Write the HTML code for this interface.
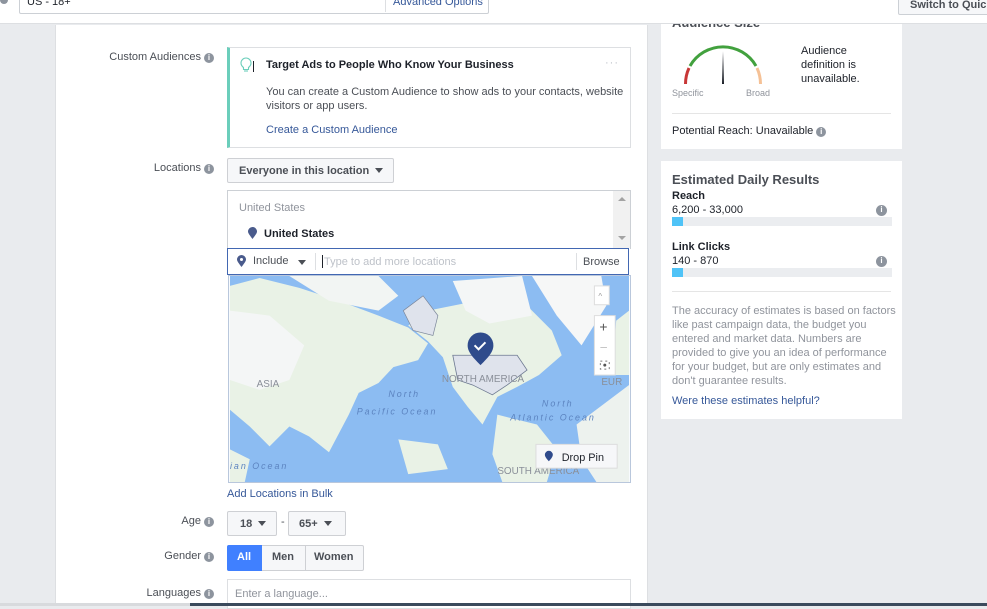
<!DOCTYPE html>
<html><head><meta charset="utf-8"><style>
*{box-sizing:border-box;margin:0;padding:0}
body{width:987px;height:606px;overflow:hidden;background:#e9ebee;font-family:"Liberation Sans",Arial,sans-serif;font-size:11px;color:#1d2129;position:relative}
.a{position:absolute}
.info{display:inline-block;width:10px;height:10px;border-radius:50%;background:#8d949e;color:#fff;font-size:8px;font-weight:bold;text-align:center;line-height:10px;vertical-align:0px;margin-left:3px}
.lbl{position:absolute;right:773px;color:#4b4f56;font-size:11px;white-space:nowrap}
.btn{position:absolute;background:#f6f7f9;border:1px solid #ced0d4;border-radius:2px;font-weight:bold;color:#4b4f56;font-size:11px}
.tri{display:inline-block;width:0;height:0;border-left:4.5px solid transparent;border-right:4.5px solid transparent;border-top:5px solid #4b4f56;vertical-align:1px;margin-left:6px}
.link{color:#365899}
</style></head><body>
<div class="a" style="left:661px;top:0;width:241px;height:149px;background:#fff"></div>
<div class="a" style="left:672px;top:15px;font-size:13px;font-weight:bold;color:#4b4f56">Audience Size</div>
<div class="a" style="left:0;top:0;width:987px;height:24px;background:#fff;border-bottom:1px solid #dddfe2"></div>
<div class="a" style="left:0;top:-4px;width:8px;height:8px;border-radius:50%;background:#8d949e"></div>
<div class="a" style="left:19px;top:-2px;width:470px;height:16px;border:1px solid #ccd0d5;border-radius:2px;background:#fff"></div>
<div class="a" style="left:27px;top:-4px;color:#1d2129;font-size:11px">US - 18+</div>
<div class="a" style="left:385px;top:-2px;width:1px;height:14px;background:#dddfe2"></div>
<div class="a link" style="left:393px;top:-4px;font-size:11px">Advanced Options</div>
<div class="a" style="left:898px;top:-2px;width:100px;height:17px;border:1px solid #ccd0d5;border-radius:2px;background:#f6f7f9;font-weight:bold;color:#4b4f56;padding:0 0 0 11px;line-height:12px">Switch to Quick</div>

<div class="a" style="left:55px;top:25px;width:593px;height:581px;background:#fff;border-left:1px solid #dddfe2;border-right:1px solid #dddfe2"></div>

<div class="lbl" style="top:51px">Custom Audiences<span class="info">i</span></div>
<div class="a" style="left:227px;top:47px;width:404px;height:101px;border:1px solid #dddfe2;border-left:3px solid #6bcebb;background:#fff"></div>
<svg class="a" style="left:239px;top:56px" width="16" height="18" viewBox="0 0 16 18"><path d="M4.5 11.5C2.5 10 2 8.5 2 7a5 5 0 0 1 10 0c0 1.5-.5 3-2.5 4.5v2h-5z" fill="none" stroke="#6bcebb" stroke-width="1.1"/><path d="M5 15h4" stroke="#6bcebb" stroke-width="1.1"/><path d="M14.5 5v11" stroke="#1d2129" stroke-width="1"/></svg>
<div class="a" style="left:266px;top:59px;font-weight:bold;font-size:11px">Target Ads to People Who Know Your Business</div>
<div class="a" style="left:605px;top:57px;color:#bec2c9;font-size:11px;letter-spacing:1px">···</div>
<div class="a" style="left:266px;top:85px;width:360px;color:#4b4f56;line-height:14px">You can create a Custom Audience to show ads to your contacts, website visitors or app users.</div>
<div class="a link" style="left:266px;top:124px">Create a Custom Audience</div>

<div class="lbl" style="top:162px">Locations<span class="info">i</span></div>
<div class="btn" style="left:227px;top:158px;width:167px;height:25px;padding:6px 0 0 11px">Everyone in this location<span class="tri"></span></div>

<div class="a" style="left:227px;top:190px;width:404px;height:59px;border:1px solid #ccd0d5;border-bottom:none;background:#fff"></div>
<div class="a" style="left:613px;top:191px;width:17px;height:57px;background:#f1f1f1"></div>
<div class="a" style="left:618px;top:197px;border-left:4px solid transparent;border-right:4px solid transparent;border-bottom:4px solid #a3a3a3"></div>
<div class="a" style="left:618px;top:236px;border-left:4px solid transparent;border-right:4px solid transparent;border-top:4px solid #a3a3a3"></div>
<div class="a" style="left:239px;top:202px;color:#90949c">United States</div>
<svg class="a" style="left:248px;top:227px" width="9" height="12" viewBox="0 0 9 12"><path d="M4.5 12C1.5 8 0 6 0 4.5a4.5 4.5 0 0 1 9 0C9 6 7.5 8 4.5 12z" fill="#4a5b8c"/></svg>
<div class="a" style="left:264px;top:228px;font-weight:bold">United States</div>

<div class="a" style="left:227px;top:248px;width:402px;height:27px;border:1px solid #4267b2;background:#fff"></div>
<svg class="a" style="left:237px;top:255px" width="9" height="12" viewBox="0 0 9 12"><path d="M4.5 12C1.5 8 0 6 0 4.5a4.5 4.5 0 0 1 9 0C9 6 7.5 8 4.5 12z" fill="#4a5b8c"/><circle cx="4.5" cy="4.5" r="1.5" fill="#fff"/></svg>
<div class="a" style="left:253px;top:255px;color:#4b4f56">Include</div>
<div class="a" style="left:298px;top:260px;border-left:4.5px solid transparent;border-right:4.5px solid transparent;border-top:5px solid #4b4f56"></div>
<div class="a" style="left:315px;top:253px;width:1px;height:17px;background:#dddfe2"></div>
<div class="a" style="left:322px;top:255px;width:1px;height:13px;background:#1d2129"></div>
<div class="a" style="left:324px;top:256px;color:#bec2c9">Type to add more locations</div>
<div class="a" style="left:576px;top:253px;width:1px;height:17px;background:#dddfe2"></div>
<div class="a" style="left:583px;top:256px;color:#4b4f56">Browse</div>

<svg class="a" style="left:228px;top:275px;border:1px solid #b9c7dc" width="403" height="208" viewBox="0 0 403 208">
<rect width="403" height="208" fill="#8cbcf2"/>
<path d="M0 10 L30 2 L70 12 L110 25 L150 40 L180 52 L200 68 L190 85 L165 92 L150 108 L130 118 L120 140 L100 178 L80 162 L60 152 L40 172 L20 152 L0 135Z" fill="#e9f2e6"/>
<path d="M0 35 L40 40 L75 70 L60 105 L30 115 L0 105Z" fill="#f4f6f6"/>
<path d="M60 0 L150 0 L170 20 L150 35 L100 25Z" fill="#f2f5f3"/>
<path d="M175 55 L190 60 L195 75 L183 80Z" fill="#e9f2e6"/>
<path d="M170 165 L210 170 L220 195 L180 200Z" fill="#e9f2e6"/>
<path d="M0 175 L20 185 L15 208 L0 208Z" fill="#e9f2e6"/>
<path d="M270 140 L310 150 L330 175 L320 208 L275 208 L265 180Z" fill="#e9f2e6"/>
<path d="M350 150 L403 110 L403 208 L370 208 L355 185Z" fill="#edf2ee"/>
<path d="M390 45 L403 35 L403 100 L386 100Z" fill="#e9f2e6"/>
<path d="M180 50 L200 35 L250 25 L290 20 L325 55 L335 80 L312 100 L290 112 L270 122 L255 150 L240 132 L225 112 L215 82 L200 66Z" fill="#e9f2e6"/>
<path d="M175 35 L195 20 L210 40 L205 60 L185 55Z" fill="#dfe3ec" stroke="#7b869a" stroke-width=".7"/>
<path d="M225 80 L290 80 L300 95 L280 110 L265 120 L245 110 L230 105Z" fill="#dfe3ec" stroke="#6c7890" stroke-width=".8"/>
<path d="M225 5 L295 0 L305 40 L262 48 L238 35Z" fill="#f4f6f6"/>
<path d="M305 0 L375 0 L380 30 L355 70 L330 40Z" fill="#f6f7f7"/>
<text x="27" y="112" font-size="10" fill="#8a8f99" font-family="Liberation Sans">ASIA</text>
<text x="214" y="107" font-size="10" fill="#8a8f99" font-family="Liberation Sans">NORTH AMERICA</text>
<text x="375" y="110" font-size="10" fill="#8a8f99" font-family="Liberation Sans">EUR</text>
<text x="160" y="122" font-size="9" fill="#5c84c0" font-style="italic" font-family="Liberation Sans" letter-spacing="2">North</text>
<text x="128" y="140" font-size="9" fill="#5c84c0" font-style="italic" font-family="Liberation Sans" letter-spacing="2">Pacific Ocean</text>
<text x="315" y="132" font-size="9" fill="#5c84c0" font-style="italic" font-family="Liberation Sans" letter-spacing="2">North</text>
<text x="283" y="146" font-size="9" fill="#5c84c0" font-style="italic" font-family="Liberation Sans" letter-spacing="2">Atlantic Ocean</text>
<text x="270" y="200" font-size="10" fill="#8a8f99" font-family="Liberation Sans">SOUTH AMERICA</text>
<text x="0" y="195" font-size="9" fill="#5c84c0" font-style="italic" font-family="Liberation Sans" letter-spacing="2">ian Ocean</text>
<path d="M253 90C244 81 240 76 240 70a13 13 0 0 1 26 0c0 6-4 11-13 20z" fill="#2f4b8c"/>
<path d="M247 70l4 4 7-7" stroke="#fff" stroke-width="2" fill="none"/>
<rect x="368" y="10" width="15" height="19" fill="#fff" stroke="#ddd"/><text x="372" y="23" font-size="8" fill="#999">^</text>
<rect x="368" y="40" width="21" height="60" fill="#fff" stroke="#ddd"/>
<text x="373" y="56" font-size="14" fill="#555">+</text><text x="374" y="75" font-size="12" fill="#bbb">–</text>
<rect x="374" y="86" width="9" height="8" fill="none" stroke="#777" stroke-dasharray="2 3"/><circle cx="378.5" cy="90" r="1.5" fill="#555"/>
<rect x="309" y="170" width="82" height="24" fill="#f6f7f9" stroke="#ddd"/>
<path d="M322 187C319 184 318 182 318 180.5a4 4 0 0 1 8 0c0 1.5-1 3.5-4 6.5z" fill="#2f4b8c"/>
<text x="335" y="187" font-size="11" fill="#1d2129" font-family="Liberation Sans">Drop Pin</text>
</svg>
<div class="a link" style="left:227px;top:488px">Add Locations in Bulk</div>

<div class="lbl" style="top:515px">Age<span class="info">i</span></div>
<div class="btn" style="left:227px;top:511px;width:50px;height:25px;padding:6px 0 0 12px">18<span class="tri"></span></div>
<div class="a" style="left:281px;top:516px;color:#4b4f56">-</div>
<div class="btn" style="left:288px;top:511px;width:58px;height:25px;padding:6px 0 0 10px">65+<span class="tri"></span></div>

<div class="lbl" style="top:550px">Gender<span class="info">i</span></div>
<div class="btn" style="left:227px;top:545px;width:137px;height:26px"></div>
<div class="a" style="left:227px;top:545px;width:35px;height:26px;background:#4080ff;color:#fff;font-weight:bold;padding:6px 0 0 10px;border-radius:2px 0 0 2px">All</div>
<div class="a" style="left:272px;top:551px;font-weight:bold;color:#4b4f56">Men</div>
<div class="a" style="left:305px;top:546px;width:1px;height:24px;background:#ced0d4"></div>
<div class="a" style="left:314px;top:551px;font-weight:bold;color:#4b4f56">Women</div>

<div class="lbl" style="top:587px">Languages<span class="info">i</span></div>
<div class="a" style="left:227px;top:579px;width:404px;height:30px;border:1px solid #dddfe2;background:#fff"></div>
<div class="a" style="left:235px;top:588px;color:#90949c">Enter a language...</div>

<svg class="a" style="left:680px;top:40px" width="90" height="50" viewBox="0 0 90 50">
<path d="M5.5 44 A38 38 0 0 1 9 28" stroke="#c83737" stroke-width="3" fill="none"/>
<path d="M10 26 A38 38 0 0 1 76 26" stroke="#42a13e" stroke-width="3" fill="none"/>
<path d="M77 28 A38 38 0 0 1 80.5 44" stroke="#f5c196" stroke-width="3" fill="none"/>
<path d="M42 44 L43 11 L44 44Z" fill="#1d2129"/>
</svg>
<div class="a" style="left:672px;top:88px;font-size:9px;color:#90949c">Specific</div>
<div class="a" style="left:746px;top:88px;font-size:9px;color:#90949c">Broad</div>
<div class="a" style="left:801px;top:44px;line-height:14px;color:#1d2129">Audience<br>definition is<br>unavailable.</div>
<div class="a" style="left:672px;top:113px;width:219px;height:1px;background:#e5e5e5"></div>
<div class="a" style="left:672px;top:125px">Potential Reach: Unavailable<span class="info">i</span></div>

<div class="a" style="left:661px;top:161px;width:241px;height:258px;background:#fff"></div>
<div class="a" style="left:672px;top:172px;font-size:13px;font-weight:bold;color:#4b4f56">Estimated Daily Results</div>
<div class="a" style="left:672px;top:190px;font-weight:bold;color:#1d2129">Reach</div>
<div class="a" style="left:672px;top:204px">6,200 - 33,000</div>
<div class="a" style="left:876px;top:203px"><span class="info" style="margin:0;width:11px;height:11px">i</span></div>
<div class="a" style="left:672px;top:217px;width:220px;height:9px;background:#ebedf0"></div>
<div class="a" style="left:672px;top:217px;width:11px;height:9px;background:#4fc3f7"></div>
<div class="a" style="left:672px;top:241px;font-weight:bold">Link Clicks</div>
<div class="a" style="left:672px;top:255px">140 - 870</div>
<div class="a" style="left:876px;top:254px"><span class="info" style="margin:0;width:11px;height:11px">i</span></div>
<div class="a" style="left:672px;top:268px;width:220px;height:9px;background:#ebedf0"></div>
<div class="a" style="left:672px;top:268px;width:11px;height:9px;background:#4fc3f7"></div>
<div class="a" style="left:672px;top:291px;width:219px;height:1px;background:#e5e5e5"></div>
<div class="a" style="left:672px;top:304px;width:225px;line-height:14px;color:#90949c">The accuracy of estimates is based on factors like past campaign data, the budget you entered and market data. Numbers are provided to give you an idea of performance for your budget, but are only estimates and don't guarantee results.</div>
<div class="a link" style="left:672px;top:395px">Were these estimates helpful?</div>

<div class="a" style="left:0;top:603px;width:987px;height:3px;background:#3a4a5c"></div>
<div class="a" style="left:0;top:603px;width:190px;height:3px;background:#d8dadd"></div>
</body></html>
